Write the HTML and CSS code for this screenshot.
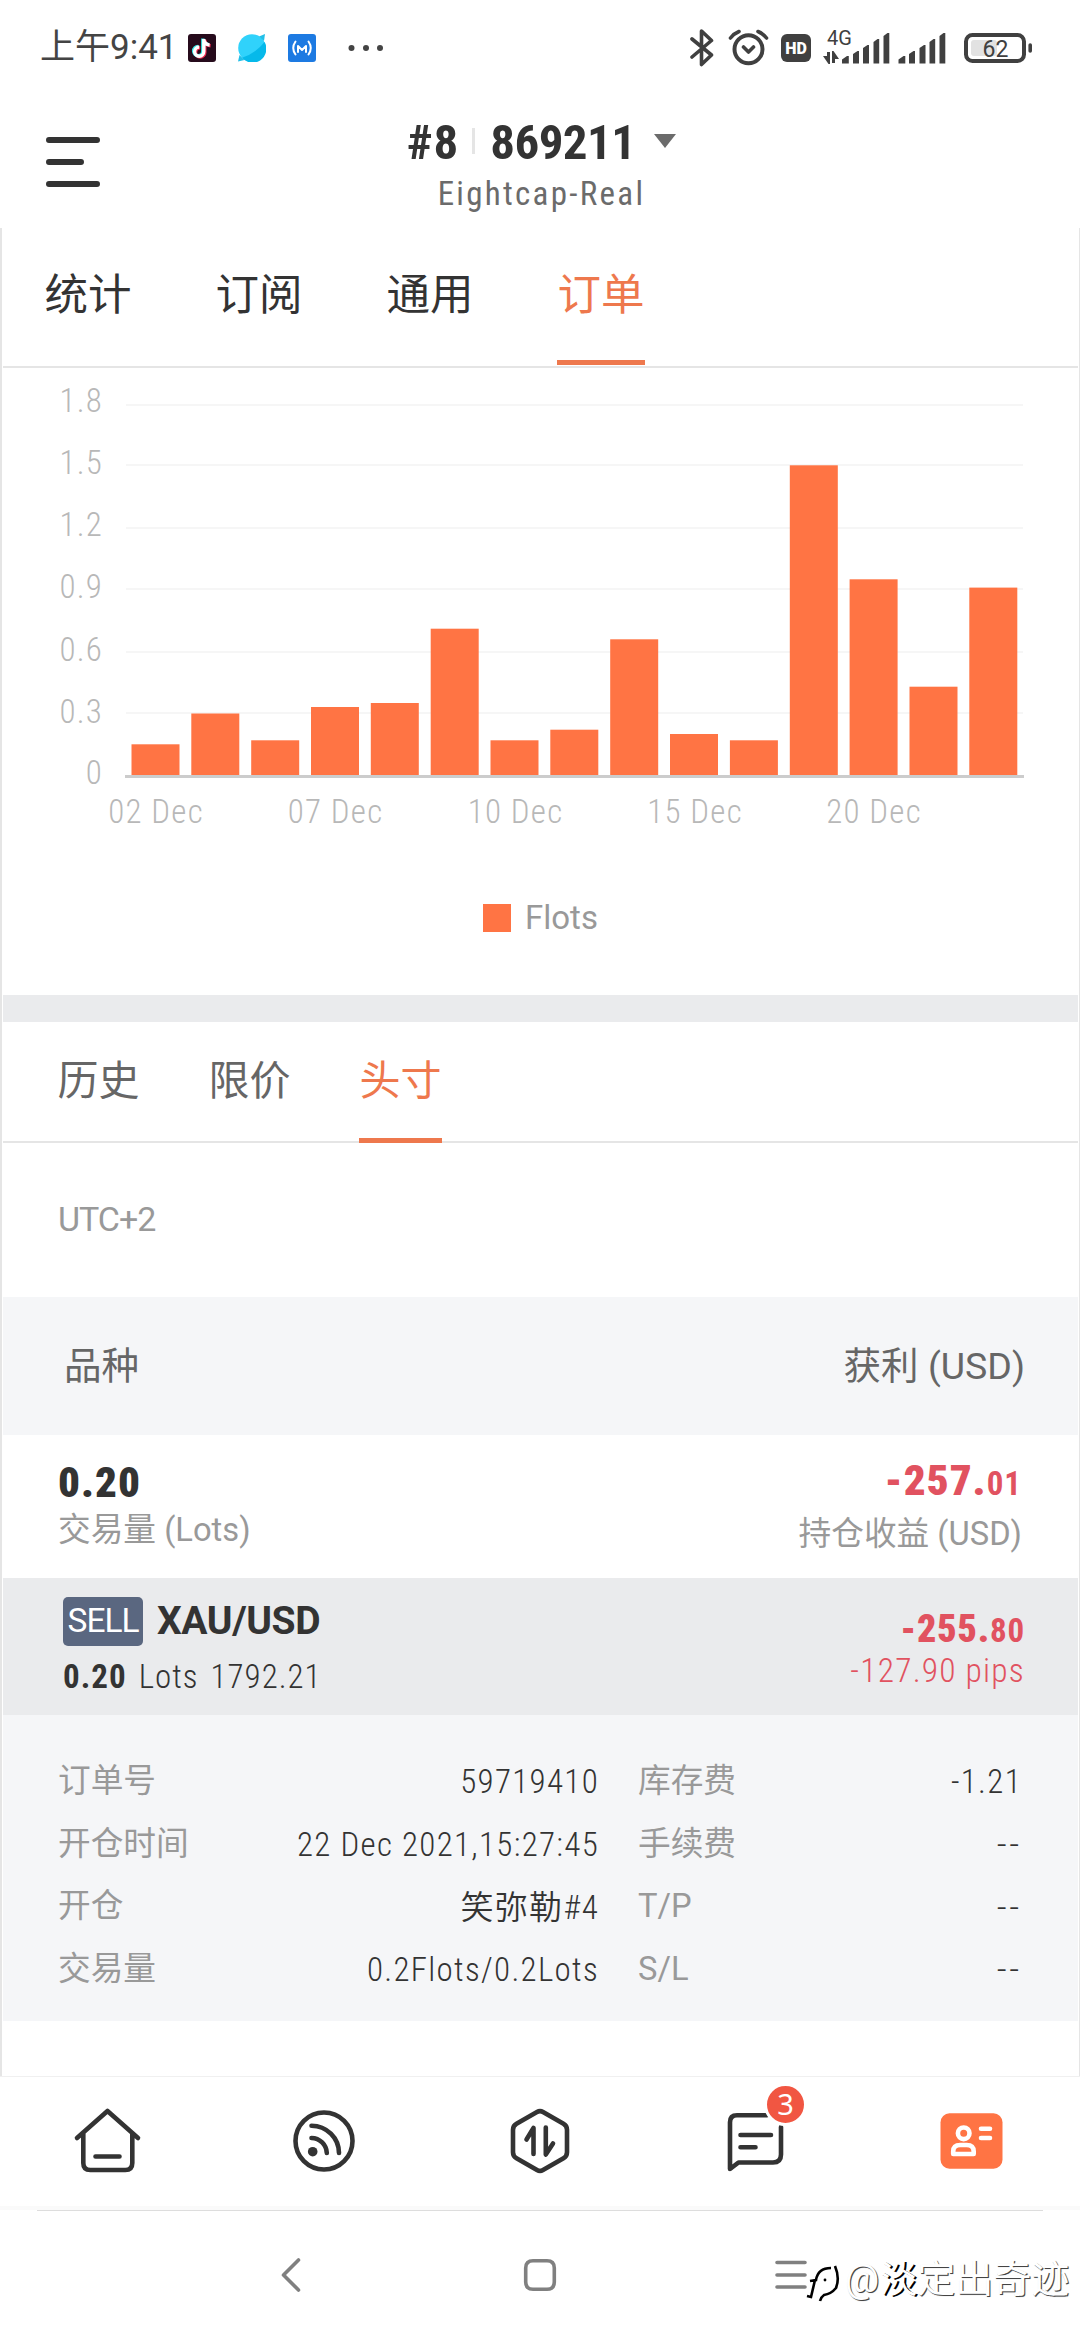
FILE: index.html
```
<!DOCTYPE html>
<html lang="zh-CN">
<head>
<meta charset="utf-8">
<title>订单</title>
<link rel="stylesheet" href="styles.css">
</head>
<body>
<header class="status">
  <span class="status-time">上午9:41</span>
  <svg class="app-icon" viewBox="0 0 28 28">
    <rect width="28" height="28" rx="3" fill="#260b1c"/>
    <g fill="none" stroke-width="3.4">
      <path d="M15.8 5v12.6a4.6 4.6 0 1 1-4.6-4.6M15.8 5.5q.8 5 5.8 5.5" stroke="#ee2d52" transform="translate(1 .8)"/>
      <path d="M15.8 5v12.6a4.6 4.6 0 1 1-4.6-4.6M15.8 5.5q.8 5 5.8 5.5" stroke="#35e6e6" transform="translate(-1 -.6)"/>
      <path d="M15.8 5v12.6a4.6 4.6 0 1 1-4.6-4.6M15.8 5.5q.8 5 5.8 5.5" stroke="#fff"/>
    </g>
  </svg>
  <svg class="app-icon" viewBox="0 0 28 28">
    <circle cx="14" cy="14" r="13.8" fill="#30d2fb"/>
    <path d="M26.5 8A13.8 13.8 0 0 1 4 23.8Q18 19 26.5 8z" fill="#06b9ea"/>
    <path d="M21 2.5 27 0l-1 7z" fill="#22bfe8"/>
    <path d="M0 27.5 1.500 21 6.500 26z" fill="#22bfe8"/>
  </svg>
  <svg class="app-icon" viewBox="0 0 28 28">
    <rect width="28" height="28" rx="3" fill="#1d7ae2"/>
    <g fill="none" stroke="#fff" stroke-width="2" stroke-linecap="round" stroke-linejoin="round">
      <path d="M7.5 7.5q-4.5 6.500 0 13M20.5 7.5q4.5 6.500 0 13M10 18v-6l4 4 4-4v6"/>
    </g>
  </svg>
  <svg class="status-more" viewBox="0 0 36 28"><g fill="#444"><circle cx="3.5" cy="14" r="3"/><circle cx="18" cy="14" r="3"/><circle cx="32" cy="14" r="3"/></g></svg>
  <svg class="status-icons" viewBox="690 26 344 44">
    <g fill="none" stroke="#404040" stroke-linecap="round" stroke-linejoin="round">
      <path d="M692 39l19.500 16-10 9.500V31l10 9.500-19.500 16.500" stroke-width="3.6"/>
      <circle cx="748.5" cy="49.3" r="14" stroke-width="4"/>
      <path d="M743.5 47l5 5 5-5M730.5 38q3.5-4.500 8.500-6.500M758 31.500q5 2 8.500 6.500" stroke-width="3.6"/>
      <rect x="966" y="35" width="58" height="26" rx="6.5" stroke-width="4"/>
      <path d="M1030.200 45v6" stroke-width="3.6"/>
    </g>
    <rect x="971" y="40" width="26" height="16" rx="3" fill="#e2e2e2"/>
    <text class="battery-text" x="995.5" y="57" text-anchor="middle">62</text>
    <rect x="781" y="34" width="30" height="28" rx="6" fill="#404040"/>
    <text class="hd-text" x="796" y="54" text-anchor="middle">HD</text>
    <text class="net-text" x="827" y="44.5">4G</text>
    <g fill="#404040">
      <path d="M823 56h4v-4h3v12h-1.500zM839 59h-4v4h-3V51h1.500z"/>
      <path d="M842 63.500v-4l5-3.500h1.800v7.500zM853 63.500V54l4.500-3h1.500v12.500zM863 63.500V48l4.500-3h1.500v18.500zM873.500 63.500V42l4-3h1.700v24.500zM883.500 63.500V36l4-3h1.800v30.500z"/>
      <path d="M898.500 63.500v-4l5-3.500h1.800v7.500zM909 63.500V54l4.500-3h1.500v12.500zM919.500 63.500V48l4.500-3h1.500v18.500zM929.500 63.500V42l4-3h1.700v24.500zM939.500 63.500V36l4-3h1.800v30.500z"/>
    </g>
  </svg>
</header>

<div class="account-bar">
  <svg class="menu-icon" viewBox="0 0 54 50"><path d="M3 3h48M3 25h32M3 47h48" stroke="#333" stroke-width="6" stroke-linecap="round"/></svg>
  <div class="account">
    <div class="account-title">
      <span class="account-rank">#8</span><i class="account-sep"></i><span class="account-id">869211</span>
      <svg class="account-caret" viewBox="0 0 22 14"><path d="M0 0h22L11 14z" fill="#6b6b6b"/></svg>
    </div>
    <div class="account-server">Eightcap-Real</div>
  </div>
</div>

<main class="page">
  <nav class="tabs tabs-main">
    <a class="tab">统计</a><a class="tab">订阅</a><a class="tab">通用</a><a class="tab active">订单</a>
  </nav>

  <section class="chart-card">
    <svg class="chart" viewBox="0 0 1075 480">
      <g class="grid-lines">
        <path d="M123 37h897M123 97h897M123 160h897M123 221h897M123 284h897M123 345h897"/>
      </g>
      <g class="bars">
        <rect x="128.5" y="376.3" width="48" height="32"/>
        <rect x="188.3" y="345.5" width="48" height="62"/>
        <rect x="248.2" y="372.3" width="48" height="36"/>
        <rect x="308" y="339" width="48" height="69"/>
        <rect x="367.8" y="335" width="48" height="73"/>
        <rect x="427.7" y="260.7" width="48" height="147"/>
        <rect x="487.5" y="372.3" width="48" height="36"/>
        <rect x="547.3" y="361.7" width="48" height="46"/>
        <rect x="607.2" y="271.3" width="48" height="136"/>
        <rect x="667" y="366" width="48" height="42"/>
        <rect x="726.9" y="372.3" width="48" height="36"/>
        <rect x="786.8" y="97.3" width="48" height="310"/>
        <rect x="846.6" y="211.3" width="48" height="196"/>
        <rect x="906.5" y="318.7" width="48" height="89"/>
        <rect x="966.3" y="219.6" width="48" height="188"/>
      </g>
      <path class="axis-line" d="M122 408.5h899"/>
      <g class="axis-text" text-anchor="end">
        <text x="100" y="43.5">1.8</text><text x="100" y="105.7">1.5</text><text x="100" y="168">1.2</text><text x="100" y="230">0.9</text><text x="100" y="292.5">0.6</text><text x="100" y="354.5">0.3</text><text x="100" y="415.5">0</text>
      </g>
      <g class="axis-text" text-anchor="middle">
        <text x="153" y="454.7">02 Dec</text><text x="332.5" y="454.7">07 Dec</text><text x="512.5" y="454.7">10 Dec</text><text x="692" y="454.7">15 Dec</text><text x="871" y="454.7">20 Dec</text>
      </g>
    </svg>
    <div class="legend"><i class="legend-mark"></i><span>Flots</span></div>
  </section>

  <nav class="tabs tabs-sub">
    <a class="tab">历史</a><a class="tab">限价</a><a class="tab active">头寸</a>
  </nav>

  <div class="timezone"><span>UTC+2</span></div>

  <div class="list-head"><span>品种</span><span>获利 (USD)</span></div>

  <section class="summary">
    <div class="summary-col">
      <div class="summary-value"><b>0.20</b></div>
      <div class="summary-label"><span>交易量 (Lots)</span></div>
    </div>
    <div class="summary-col profit">
      <div class="summary-value"><b>-257.</b><small>01</small></div>
      <div class="summary-label"><span>持仓收益 (USD)</span></div>
    </div>
  </section>

  <section class="position">
    <div class="position-main">
      <div class="position-symbol"><span class="side">SELL</span><b>XAU/USD</b></div>
      <div class="position-lots"><b>0.20</b><span>Lots</span><span>1792.21</span></div>
    </div>
    <div class="position-result">
      <div class="result-money"><b>-255.</b><small>80</small></div>
      <div class="result-pips"><span>-127.90 pips</span></div>
    </div>
  </section>

  <section class="details">
    <dl class="detail-col detail-left">
      <div><dt>订单号</dt><dd>59719410</dd></div>
      <div><dt>开仓时间</dt><dd>22 Dec 2021,15:27:45</dd></div>
      <div><dt>开仓</dt><dd>笑弥勒#4</dd></div>
      <div><dt>交易量</dt><dd>0.2Flots/0.2Lots</dd></div>
    </dl>
    <dl class="detail-col detail-right">
      <div><dt>库存费</dt><dd>-1.21</dd></div>
      <div><dt>手续费</dt><dd class="empty">--</dd></div>
      <div><dt>T/P</dt><dd class="empty">--</dd></div>
      <div><dt>S/L</dt><dd class="empty">--</dd></div>
    </dl>
  </section>
</main>

<nav class="tabbar">
  <a class="tabbar-item"><svg viewBox="0 0 72 72"><path d="M5 33 35.500 6 66 33M11.300 28v30q0 7 7 7h35q7 0 7-7V28M23.500 51.500h24"/></svg></a>
  <a class="tabbar-item"><svg viewBox="0 0 72 72"><circle cx="36" cy="36" r="28.5"/><path d="M23.500 33A15.500 15.500 0 0 1 38.800 48M23.500 20.700A27.500 27.500 0 0 1 51 48"/><circle class="solid" cx="24.7" cy="46.7" r="4.8"/></svg></a>
  <a class="tabbar-item"><svg viewBox="0 0 72 72"><path d="M33 7q3-1.800 6 0l20.500 11.700q3.500 2 3.500 6v22.600q0 4-3.500 6L39 65q-3 1.800-6 0L12.500 53.300q-3.500-2-3.500-6V24.700q0-4 3.500-6z"/><path d="M22.500 34.500 29.500 23v26M49 38.500 41.800 49.500v-27"/></svg></a>
  <a class="tabbar-item"><svg viewBox="0 0 72 72"><path d="M47 10.300H17q-7 0-7 7V64l8.500-6.500H53q8 0 8-8V22M20.500 30H51M20.500 42.300H35.500"/></svg><span class="badge">3</span></a>
  <a class="tabbar-item"><svg viewBox="0 0 72 72"><rect class="card-fill" x="4.5" y="8.3" width="62" height="55.4" rx="9"/><g class="card-lines"><circle cx="27.7" cy="28.3" r="5.8"/><path d="M17.200 49v-2.500q0-6.500 7-6.500h6.500q7 0 7 6.500V49zM45 23.700h9M45 33h9"/></g></svg></a>
</nav>

<footer class="sysnav">
  <svg viewBox="0 0 32 36"><path d="M25.500 3 10.500 18l15 15"/></svg>
  <svg viewBox="0 0 36 36"><path d="M11 3.700h14q7.300 0 7.300 7.300v14q0 7.300-7.300 7.300H11q-7.300 0-7.300-7.300V11q0-7.300 7.300-7.300z"/></svg>
  <svg viewBox="0 0 36 36"><path d="M4 5.500h28M4 18h28M4 30h28"/></svg>
</footer>

<div class="watermark">
  <svg viewBox="0 0 36 48"><path class="wm-fill" d="M8 10 22 3h8l4 14-4 16-14 10-14-1z"/><path d="M4 23l6-1q2-12 15-12M9 22 5 39l-4-1" stroke-width="2.6"/><path d="M29 8q5 12 1 22-5 6-12 7-3 2-4 6" stroke-width="2.6"/><circle class="wm-eye" cx="19" cy="22" r="1.4"/></svg>
  <span>@<b>淡</b>定出奇迹</span>
</div>
</body>
</html>
```
FILE: styles.css
```
* { box-sizing: border-box; }

body {
  margin: 0;
  width: 1080px;
  height: 2340px;
  overflow: hidden;
  position: relative;
  display: flex;
  flex-direction: column;
  background: #fff;
  color: #333;
  font-family: Roboto, "Noto Sans CJK SC", sans-serif;
  font-size: 33px;
}

svg { display: block; flex: none; }
dl, dt, dd { margin: 0; }
small { font-size: inherit; }

/* status bar */
.status { height: 94px; padding: 0 46px 0 40px; display: flex; align-items: center; }
.status-time { width: 148px; padding-top: 2px; font-size: 35px; line-height: 48px; color: #444; white-space: nowrap; }
.app-icon { width: 28px; height: 28px; margin: 2px 22px 0 0; }
.status-more { width: 36px; height: 28px; margin: 2px 0 0 10px; }
.status-icons { width: 344px; height: 44px; margin: 2px 0 0 auto; }
.status-icons text { font-family: Roboto, sans-serif; fill: #404040; }
.status-icons .battery-text { font-size: 23px; }
.status-icons .hd-text { font-size: 16px; font-weight: 900; fill: #fff; }
.status-icons .net-text { font-size: 20px; }

/* account header */
.account-bar {
  height: 134px;
  padding: 21px 46px 0;
  display: grid;
  grid-template-columns: 1fr auto 1fr;
  align-items: start;
}
.menu-icon { width: 54px; height: 50px; margin-top: 22px; }
.account { display: flex; flex-direction: column; align-items: center; gap: 3px; margin-left: 3px; }
.account-title { display: flex; align-items: center; height: 56px; font: 700 49px/56px "Roboto Condensed", sans-serif; }
.account-rank { letter-spacing: 1px; }
.account-sep { width: 3px; height: 26px; margin: 0 15px 4px 13px; background: #e5e5e5; }
.account-id { letter-spacing: -.6px; }
.account-caret { width: 22px; height: 14px; margin: 0 0 5px 19px; }
.account-server { font: 400 33px/40px "Roboto Condensed", sans-serif; letter-spacing: 2.3px; color: #6b6b6b; }

/* framed web content */
.page { height: 1848px; padding: 0 1px; border-left: 2px solid #e5e5e5; border-right: 1px solid #e5e5e5; }

.tabs { display: flex; border-bottom: 2px solid #e5e5e5; white-space: nowrap; }
.tab { text-align: center; }
.tab.active { color: #ee784d; border-bottom: 5px solid #ee784d; }
.tabs-main { height: 140px; padding: 0 0 1px 41px; gap: 83px; font-size: 43.5px; line-height: 60px; }
.tabs-main .tab { width: 88px; padding-top: 38px; }
.tabs-sub { height: 121px; padding-left: 54px; gap: 68px; font-size: 41px; line-height: 60px; color: #666; }
.tabs-sub .tab { width: 83px; height: 121px; padding-top: 29px; }

/* chart */
.chart-card { height: 654px; border-bottom: 27px solid #eaebed; }
.chart { width: 1075px; height: 480px; }
.grid-lines path { stroke: #f6f6f6; stroke-width: 2; }
.bars rect { fill: #ff7444; }
.axis-line { stroke: #ccc; stroke-width: 3; }
.axis-text { fill: #b8b8b8; font: 300 33px "Roboto Condensed", sans-serif; letter-spacing: 1.2px; }
.legend { display: flex; align-items: center; justify-content: center; gap: 14px; margin-top: 50px; height: 40px; line-height: 40px; color: #999; }
.legend-mark { width: 28px; height: 28px; background: #ff7444; }

/* positions list */
.timezone { height: 154px; padding-left: 55px; line-height: 153px; font-size: 34px; letter-spacing: -1px; color: #999; }
.list-head { height: 138px; padding: 0 53px 8px 61px; display: flex; align-items: center; justify-content: space-between; background: #f5f6f8; color: #666; font-size: 37.5px; }

.summary { height: 143px; padding: 0 56px 0 55px; display: flex; justify-content: space-between; }
.summary-col { padding-top: 22px; }
.summary-value { font: 700 43px/50px "Roboto Condensed", sans-serif; letter-spacing: 1px; }
.summary-label { line-height: 46px; color: #999; font-size: 32.7px; }
.summary .profit { padding-top: 20px; text-align: right; }
.profit .summary-value { color: #e15260; }
.profit .summary-value small { font-size: 33px; }
.profit .summary-label { margin-top: 2px; }

.position { height: 137px; padding: 19px 53px 0 60px; display: flex; justify-content: space-between; background: #eaebed; }
.position-symbol { display: flex; height: 49px; gap: 14px; font-size: 39px; line-height: 48px; letter-spacing: -.4px; }
.side { width: 80px; border-radius: 5px; background: #5a6780; color: #fff; text-align: center; font-size: 33.5px; letter-spacing: -1px; }
.position-lots { display: flex; margin-top: 11px; gap: 12px; font: 300 33px/40px "Roboto Condensed", sans-serif; letter-spacing: 1px; }
.position-lots b { font-weight: 700; }
.position-result { padding-top: 12px; text-align: right; line-height: 40px; font-family: "Roboto Condensed", sans-serif; color: #e15260; }
.result-money { font-size: 38px; font-weight: 700; letter-spacing: .8px; }
.result-money small { font-size: 33px; }
.result-pips { font-size: 33.5px; font-weight: 300; letter-spacing: 1.2px; }

.details { height: 306px; padding: 36px 56px 0 55px; display: flex; justify-content: space-between; background: #f5f6f8; }
.detail-left { width: 541px; }
.detail-right { width: 384px; }
.detail-col > div { height: 62.7px; display: flex; justify-content: space-between; align-items: center; line-height: 40px; }
.detail-col dt { padding-bottom: 3px; color: #999; font-size: 32.7px; }
.detail-col dd { font-family: "Roboto Condensed", "Noto Sans CJK SC", sans-serif; letter-spacing: 1.3px; font-weight: 350; }
.detail-col .empty { font-family: Roboto, sans-serif; letter-spacing: 3px; }

/* app tab bar */
.tabbar { height: 134px; display: flex; border-top: 1px solid #f0f0f0; border-bottom: 4px solid #fafafa; }
.tabbar-item { flex: 1; display: flex; align-items: center; justify-content: center; position: relative; }
.tabbar-item svg { width: 72px; height: 72px; margin-bottom: 1px; fill: none; stroke: #333; stroke-width: 4.6; stroke-linecap: round; stroke-linejoin: round; }
.tabbar-item .solid { fill: #333; stroke: none; }
.tabbar-item .card-fill { fill: #ff7444; stroke: none; }
.tabbar-item .card-lines { stroke: #fff; }
.badge { position: absolute; left: 116px; top: 6px; width: 43px; height: 43px; border: 3px solid #fff; border-radius: 50%; background: #f15642; color: #fff; font: 29px/36px "Noto Sans", sans-serif; text-align: center; }

/* system navigation */
.sysnav { height: 130px; position: relative; padding: 0 0 0 271px; display: flex; align-items: flex-start; gap: 215px; }
.sysnav::before { content: ""; position: absolute; left: 37px; right: 37px; top: 0; height: 1px; background: #ddd; }
.sysnav svg { width: 36px; height: 36px; margin-top: 47px; fill: none; stroke: #808080; stroke-width: 3.6; stroke-linecap: round; stroke-linejoin: round; }

.watermark { position: absolute; left: 806px; top: 2252px; height: 54px; display: flex; align-items: center; font-size: 38px; line-height: 54px; color: #fff; text-shadow: 1px 1px 0 #444, 1px 1px 1px #999; white-space: nowrap; }
.watermark svg { width: 36px; height: 48px; margin: 6px 3px 0 0; fill: none; stroke: #000; }
.watermark .wm-fill { fill: #fff; stroke: #fff; }
.watermark .wm-eye { fill: #000; stroke: none; }
.watermark b { font-weight: 400; text-shadow: 2px 1px 0 #000; }
```
